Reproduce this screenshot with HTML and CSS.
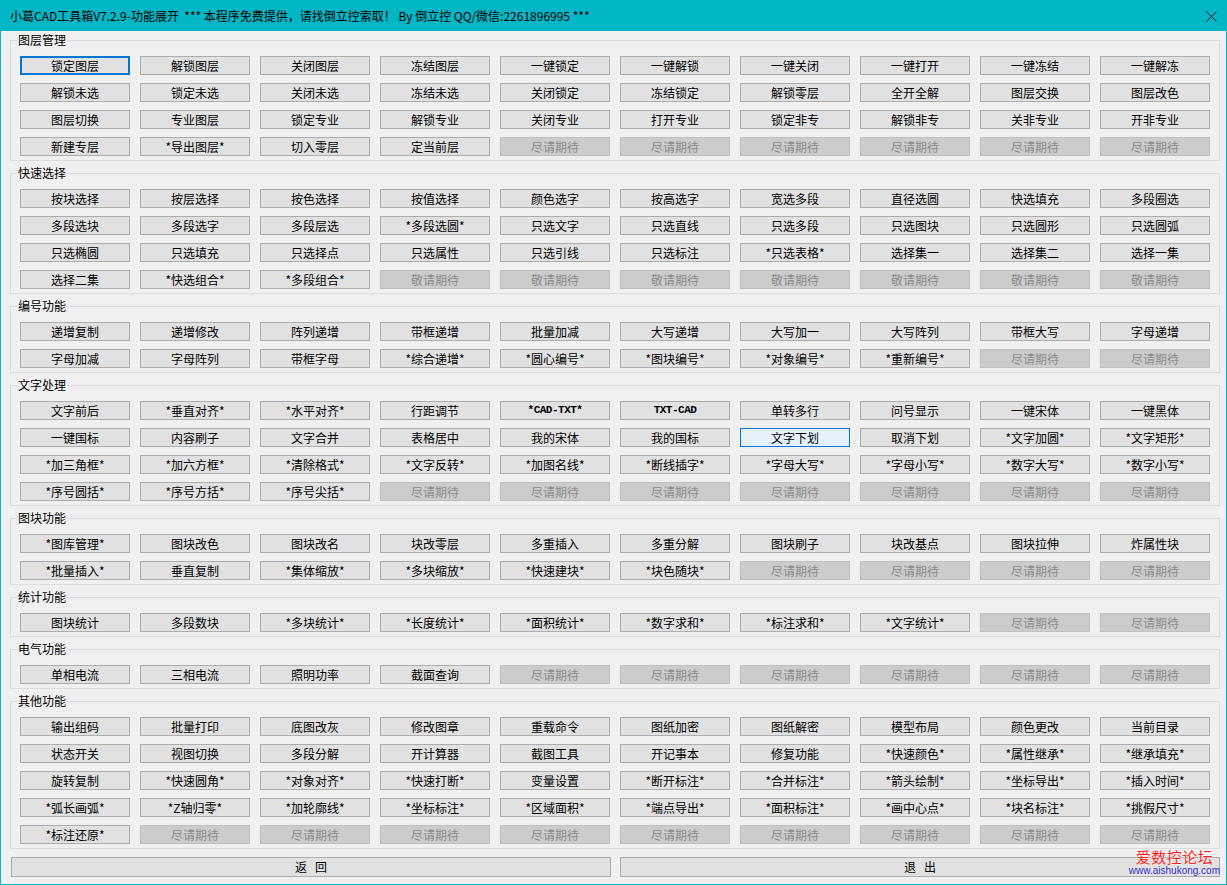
FILE: index.html
```html
<!DOCTYPE html>
<html>
    <head>
        <title>小葛CAD工具箱</title>
        <link rel="stylesheet" href="styles.css">
    </head>
    <body>
        <div class="window">
            <div class="titlebar">
                <span class="caption">小葛CAD工具箱V7.2.9-功能展开&nbsp; *** 本程序免费提供，请找倒立控索取！ By 倒立控 QQ/微信:2261896995 ***</span>
                <svg class="close" width="11" height="11" viewBox="0 0 11 11"><path d="M0.5 0.5 L10.5 10.5 M10.5 0.5 L0.5 10.5" stroke="#111" stroke-width="1" fill="none"/></svg>
            </div>
            <div class="client">
                <div class="group">
                    <div class="legend">图层管理</div>
                    <div class="grid">
                        <button class="btn focus">锁定图层</button>
                        <button class="btn">解锁图层</button>
                        <button class="btn">关闭图层</button>
                        <button class="btn">冻结图层</button>
                        <button class="btn">一键锁定</button>
                        <button class="btn">一键解锁</button>
                        <button class="btn">一键关闭</button>
                        <button class="btn">一键打开</button>
                        <button class="btn">一键冻结</button>
                        <button class="btn">一键解冻</button>
                        <button class="btn">解锁未选</button>
                        <button class="btn">锁定未选</button>
                        <button class="btn">关闭未选</button>
                        <button class="btn">冻结未选</button>
                        <button class="btn">关闭锁定</button>
                        <button class="btn">冻结锁定</button>
                        <button class="btn">解锁零层</button>
                        <button class="btn">全开全解</button>
                        <button class="btn">图层交换</button>
                        <button class="btn">图层改色</button>
                        <button class="btn">图层切换</button>
                        <button class="btn">专业图层</button>
                        <button class="btn">锁定专业</button>
                        <button class="btn">解锁专业</button>
                        <button class="btn">关闭专业</button>
                        <button class="btn">打开专业</button>
                        <button class="btn">锁定非专</button>
                        <button class="btn">解锁非专</button>
                        <button class="btn">关非专业</button>
                        <button class="btn">开非专业</button>
                        <button class="btn">新建专层</button>
                        <button class="btn">*导出图层*</button>
                        <button class="btn">切入零层</button>
                        <button class="btn">定当前层</button>
                        <button class="btn off" disabled>尽请期待</button>
                        <button class="btn off" disabled>尽请期待</button>
                        <button class="btn off" disabled>尽请期待</button>
                        <button class="btn off" disabled>尽请期待</button>
                        <button class="btn off" disabled>尽请期待</button>
                        <button class="btn off" disabled>尽请期待</button>
                    </div>
                </div>
                <div class="group">
                    <div class="legend">快速选择</div>
                    <div class="grid">
                        <button class="btn">按块选择</button>
                        <button class="btn">按层选择</button>
                        <button class="btn">按色选择</button>
                        <button class="btn">按值选择</button>
                        <button class="btn">颜色选字</button>
                        <button class="btn">按高选字</button>
                        <button class="btn">宽选多段</button>
                        <button class="btn">直径选圆</button>
                        <button class="btn">快选填充</button>
                        <button class="btn">多段圈选</button>
                        <button class="btn">多段选块</button>
                        <button class="btn">多段选字</button>
                        <button class="btn">多段层选</button>
                        <button class="btn">*多段选圆*</button>
                        <button class="btn">只选文字</button>
                        <button class="btn">只选直线</button>
                        <button class="btn">只选多段</button>
                        <button class="btn">只选图块</button>
                        <button class="btn">只选圆形</button>
                        <button class="btn">只选圆弧</button>
                        <button class="btn">只选椭圆</button>
                        <button class="btn">只选填充</button>
                        <button class="btn">只选择点</button>
                        <button class="btn">只选属性</button>
                        <button class="btn">只选引线</button>
                        <button class="btn">只选标注</button>
                        <button class="btn">*只选表格*</button>
                        <button class="btn">选择集一</button>
                        <button class="btn">选择集二</button>
                        <button class="btn">选择一集</button>
                        <button class="btn">选择二集</button>
                        <button class="btn">*快选组合*</button>
                        <button class="btn">*多段组合*</button>
                        <button class="btn off" disabled>敬请期待</button>
                        <button class="btn off" disabled>敬请期待</button>
                        <button class="btn off" disabled>敬请期待</button>
                        <button class="btn off" disabled>敬请期待</button>
                        <button class="btn off" disabled>敬请期待</button>
                        <button class="btn off" disabled>敬请期待</button>
                        <button class="btn off" disabled>敬请期待</button>
                    </div>
                </div>
                <div class="group">
                    <div class="legend">编号功能</div>
                    <div class="grid">
                        <button class="btn">递增复制</button>
                        <button class="btn">递增修改</button>
                        <button class="btn">阵列递增</button>
                        <button class="btn">带框递增</button>
                        <button class="btn">批量加减</button>
                        <button class="btn">大写递增</button>
                        <button class="btn">大写加一</button>
                        <button class="btn">大写阵列</button>
                        <button class="btn">带框大写</button>
                        <button class="btn">字母递增</button>
                        <button class="btn">字母加减</button>
                        <button class="btn">字母阵列</button>
                        <button class="btn">带框字母</button>
                        <button class="btn">*综合递增*</button>
                        <button class="btn">*圆心编号*</button>
                        <button class="btn">*图块编号*</button>
                        <button class="btn">*对象编号*</button>
                        <button class="btn">*重新编号*</button>
                        <button class="btn off" disabled>尽请期待</button>
                        <button class="btn off" disabled>尽请期待</button>
                    </div>
                </div>
                <div class="group">
                    <div class="legend">文字处理</div>
                    <div class="grid">
                        <button class="btn">文字前后</button>
                        <button class="btn">*垂直对齐*</button>
                        <button class="btn">*水平对齐*</button>
                        <button class="btn">行距调节</button>
                        <button class="btn mono">*CAD-TXT*</button>
                        <button class="btn mono">TXT-CAD</button>
                        <button class="btn">单转多行</button>
                        <button class="btn">问号显示</button>
                        <button class="btn">一键宋体</button>
                        <button class="btn">一键黑体</button>
                        <button class="btn">一键国标</button>
                        <button class="btn">内容刷子</button>
                        <button class="btn">文字合并</button>
                        <button class="btn">表格居中</button>
                        <button class="btn">我的宋体</button>
                        <button class="btn">我的国标</button>
                        <button class="btn hot">文字下划</button>
                        <button class="btn">取消下划</button>
                        <button class="btn">*文字加圆*</button>
                        <button class="btn">*文字矩形*</button>
                        <button class="btn">*加三角框*</button>
                        <button class="btn">*加六方框*</button>
                        <button class="btn">*清除格式*</button>
                        <button class="btn">*文字反转*</button>
                        <button class="btn">*加图名线*</button>
                        <button class="btn">*断线插字*</button>
                        <button class="btn">*字母大写*</button>
                        <button class="btn">*字母小写*</button>
                        <button class="btn">*数字大写*</button>
                        <button class="btn">*数字小写*</button>
                        <button class="btn">*序号圆括*</button>
                        <button class="btn">*序号方括*</button>
                        <button class="btn">*序号尖括*</button>
                        <button class="btn off" disabled>尽请期待</button>
                        <button class="btn off" disabled>尽请期待</button>
                        <button class="btn off" disabled>尽请期待</button>
                        <button class="btn off" disabled>尽请期待</button>
                        <button class="btn off" disabled>尽请期待</button>
                        <button class="btn off" disabled>尽请期待</button>
                        <button class="btn off" disabled>尽请期待</button>
                    </div>
                </div>
                <div class="group">
                    <div class="legend">图块功能</div>
                    <div class="grid">
                        <button class="btn">*图库管理*</button>
                        <button class="btn">图块改色</button>
                        <button class="btn">图块改名</button>
                        <button class="btn">块改零层</button>
                        <button class="btn">多重插入</button>
                        <button class="btn">多重分解</button>
                        <button class="btn">图块刷子</button>
                        <button class="btn">块改基点</button>
                        <button class="btn">图块拉伸</button>
                        <button class="btn">炸属性块</button>
                        <button class="btn">*批量插入*</button>
                        <button class="btn">垂直复制</button>
                        <button class="btn">*集体缩放*</button>
                        <button class="btn">*多块缩放*</button>
                        <button class="btn">*快速建块*</button>
                        <button class="btn">*块色随块*</button>
                        <button class="btn off" disabled>尽请期待</button>
                        <button class="btn off" disabled>尽请期待</button>
                        <button class="btn off" disabled>尽请期待</button>
                        <button class="btn off" disabled>尽请期待</button>
                    </div>
                </div>
                <div class="group">
                    <div class="legend">统计功能</div>
                    <div class="grid">
                        <button class="btn">图块统计</button>
                        <button class="btn">多段数块</button>
                        <button class="btn">*多块统计*</button>
                        <button class="btn">*长度统计*</button>
                        <button class="btn">*面积统计*</button>
                        <button class="btn">*数字求和*</button>
                        <button class="btn">*标注求和*</button>
                        <button class="btn">*文字统计*</button>
                        <button class="btn off" disabled>尽请期待</button>
                        <button class="btn off" disabled>尽请期待</button>
                    </div>
                </div>
                <div class="group">
                    <div class="legend">电气功能</div>
                    <div class="grid">
                        <button class="btn">单相电流</button>
                        <button class="btn">三相电流</button>
                        <button class="btn">照明功率</button>
                        <button class="btn">截面查询</button>
                        <button class="btn off" disabled>尽请期待</button>
                        <button class="btn off" disabled>尽请期待</button>
                        <button class="btn off" disabled>尽请期待</button>
                        <button class="btn off" disabled>尽请期待</button>
                        <button class="btn off" disabled>尽请期待</button>
                        <button class="btn off" disabled>尽请期待</button>
                    </div>
                </div>
                <div class="group">
                    <div class="legend">其他功能</div>
                    <div class="grid">
                        <button class="btn">输出组码</button>
                        <button class="btn">批量打印</button>
                        <button class="btn">底图改灰</button>
                        <button class="btn">修改图章</button>
                        <button class="btn">重载命令</button>
                        <button class="btn">图纸加密</button>
                        <button class="btn">图纸解密</button>
                        <button class="btn">模型布局</button>
                        <button class="btn">颜色更改</button>
                        <button class="btn">当前目录</button>
                        <button class="btn">状态开关</button>
                        <button class="btn">视图切换</button>
                        <button class="btn">多段分解</button>
                        <button class="btn">开计算器</button>
                        <button class="btn">截图工具</button>
                        <button class="btn">开记事本</button>
                        <button class="btn">修复功能</button>
                        <button class="btn">*快速颜色*</button>
                        <button class="btn">*属性继承*</button>
                        <button class="btn">*继承填充*</button>
                        <button class="btn">旋转复制</button>
                        <button class="btn">*快速圆角*</button>
                        <button class="btn">*对象对齐*</button>
                        <button class="btn">*快速打断*</button>
                        <button class="btn">变量设置</button>
                        <button class="btn">*断开标注*</button>
                        <button class="btn">*合并标注*</button>
                        <button class="btn">*箭头绘制*</button>
                        <button class="btn">*坐标导出*</button>
                        <button class="btn">*插入时间*</button>
                        <button class="btn">*弧长画弧*</button>
                        <button class="btn">*Z轴归零*</button>
                        <button class="btn">*加轮廓线*</button>
                        <button class="btn">*坐标标注*</button>
                        <button class="btn">*区域面积*</button>
                        <button class="btn">*端点导出*</button>
                        <button class="btn">*面积标注*</button>
                        <button class="btn">*画中心点*</button>
                        <button class="btn">*块名标注*</button>
                        <button class="btn">*挑假尺寸*</button>
                        <button class="btn">*标注还原*</button>
                        <button class="btn off" disabled>尽请期待</button>
                        <button class="btn off" disabled>尽请期待</button>
                        <button class="btn off" disabled>尽请期待</button>
                        <button class="btn off" disabled>尽请期待</button>
                        <button class="btn off" disabled>尽请期待</button>
                        <button class="btn off" disabled>尽请期待</button>
                        <button class="btn off" disabled>尽请期待</button>
                        <button class="btn off" disabled>尽请期待</button>
                        <button class="btn off" disabled>尽请期待</button>
                    </div>
                </div>
                <div class="footer">
                    <button class="btn wide">返&nbsp;&nbsp;&nbsp;回</button>
                    <button class="btn wide">退&nbsp;&nbsp;&nbsp;出</button>
                </div>
                <div class="mark">
                    <div class="mark-name">爱数控论坛</div>
                    <div class="mark-url">www.aishukong.com</div>
                </div>
            </div>
        </div>
    </body>
</html>
```

FILE: styles.css
```css
body {
    margin: 0;
    padding: 0;
    font-family: "Noto Sans CJK SC", sans-serif;
    font-size: 12px;
}
.window {
    width: 1227px;
    height: 885px;
    box-sizing: border-box;
    background-color: #02b6c5;
    display: flex;
    flex-direction: column;
    overflow: hidden;
}
.titlebar {
    height: 31px;
    flex: none;
    display: flex;
    align-items: center;
    justify-content: space-between;
    padding: 0 10px 0 10px;
    color: #000;
}
.caption {
    font-size: 12px;
    line-height: 16px;
}
.close {
    display: block;
    margin-top: 2px;
}
.client {
    position: relative;
    flex: 1;
    margin: 0 1px 1px 1px;
    background-color: #f0f0f0;
    padding-top: 9px;
}
.group {
    position: relative;
    border: 1px solid #dcdcdc;
    margin: 0 6px 12px 9px;
    padding: 15px 9px 4px 9px;
}
.legend {
    position: absolute;
    top: -9px;
    left: 6px;
    padding: 0 1px;
    line-height: 16px;
    background-color: #f0f0f0;
    color: #000;
}
.grid {
    display: grid;
    grid-template-columns: repeat(10, 110px);
    column-gap: 10px;
    row-gap: 8px;
}
.btn {
    height: 19px;
    box-sizing: border-box;
    padding: 0;
    margin: 0;
    border: 1px solid #adadad;
    background-color: #e1e1e1;
    color: #000;
    font-family: "Noto Sans CJK SC", sans-serif;
    font-size: 12px;
    line-height: 17px;
    text-align: center;
    white-space: nowrap;
    overflow: hidden;
}
.btn.mono {
    font-family: "Liberation Mono", "Noto Sans CJK SC", monospace;
    font-size: 11px;
    font-weight: bold;
    letter-spacing: -0.5px;
}
.btn.off {
    background-color: #cccccc;
    border-color: #bfbfbf;
    color: #8a8a8a;
}
.btn.focus {
    border: 2px solid #0078d7;
    line-height: 15px;
}
.btn.hot {
    background-color: #e5f1fb;
    border-color: #0078d7;
}
.footer {
    display: grid;
    grid-template-columns: 600px 600px;
    column-gap: 9px;
    margin: -4px 0 0 10px;
}
.btn.wide {
    height: 20px;
    line-height: 18px;
}
.mark {
    position: absolute;
    right: 6px;
    bottom: 7px;
    text-align: center;
}
.mark-name {
    color: #ff1e1e;
    font-size: 15px;
    line-height: 17px;
    letter-spacing: 0.5px;
    text-shadow: 0 0 2px #fff, 0 0 1px #fff;
}
.mark-url {
    color: #3232c8;
    font-family: "Liberation Sans", sans-serif;
    font-size: 10px;
    line-height: 12px;
}
```
